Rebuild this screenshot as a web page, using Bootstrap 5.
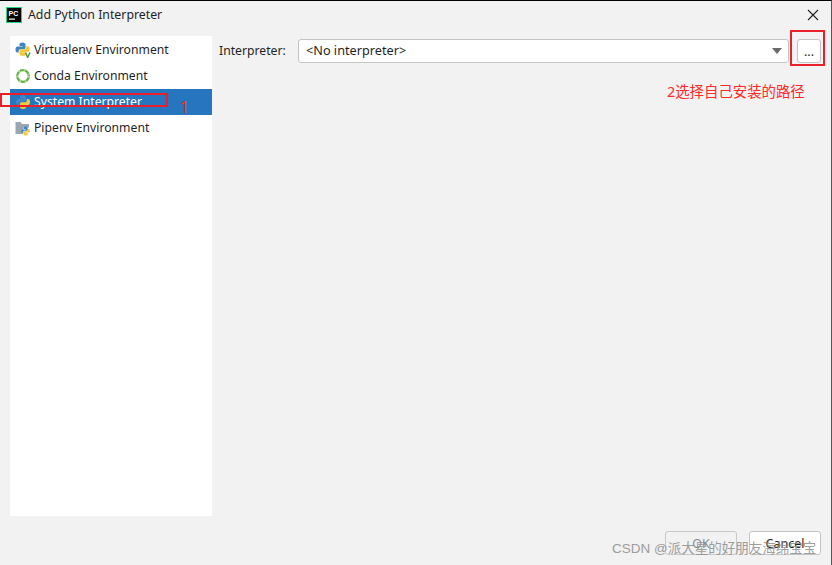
<!DOCTYPE html>
<html lang="en">
<head>
<meta charset="utf-8">
<title>Add Python Interpreter</title>
<link rel="stylesheet" href="https://cdn.jsdelivr.net/npm/bootstrap@5.3.0/dist/css/bootstrap.min.css">
<style>
html,body{height:100%;margin:0}
body{background:#f2f2f2;font-family:"Noto Sans","Noto Sans CJK SC",sans-serif;font-size:12.2px;color:#1f1f1f;overflow:hidden}
.dlg{width:832px;height:565px;position:relative;border-top:1px solid #000;border-right:1px solid #555}
.titlebar{height:28px;padding-left:6px;gap:6px;font-size:12.3px}
.pclogo{width:16px;height:16px;flex:none;display:block}
.closex{margin-left:auto;margin-right:12px;width:12px;height:12px;display:block}
.mainarea{height:480px;margin-top:7px;padding-left:10px}
.sidepanel{width:202px;background:#fff;padding-top:1px;flex:none;border-radius:0}
.siderow{height:26px;padding:0 0 0 5px;gap:3px;border:0;border-radius:0;background:transparent;color:#1f1f1f;line-height:26px;font-size:12.2px}
.siderow.is-on{background:#2675bf;color:#fff}
.ic{width:16px;height:16px;flex:none;display:block}
.formpane{padding:3px 0 0 7px;flex:1}
.formrow{height:24px;gap:0}
.flabel{width:79px;flex:none}
.combo{width:491px;height:24px;background:#fff;border:1px solid #c4c4c4;border-radius:3px;padding:0 7px;flex:none;font-size:12.7px}
.caret{margin-left:auto;margin-right:-1px;width:0;height:0;border-left:5px solid transparent;border-right:5px solid transparent;border-top:6px solid #6b6b6b}
.dots{width:24px;height:24px;margin-left:8px;padding:0;background:#fff;border:1px solid #c4c4c4;border-radius:3px;font-size:12.5px;line-height:24px;color:#1f1f1f;flex:none}
.foot{position:absolute;right:10px;top:530px;gap:12px}
.ftbtn{width:72px;height:24px;padding:0;background:#fff;border:1px solid #c4c4c4;border-radius:3px;font-size:12.5px;line-height:23px;color:#1f1f1f}
.ftbtn:disabled{background:#f2f2f2;border-color:#c9c9c9;color:#8c8c8c;opacity:1}
.redbox{position:absolute;border:2px solid #e8202c;pointer-events:none}
.rb1{left:0;top:92px;width:168px;height:14px}
.rb2{left:790px;top:29px;width:35px;height:36px}
.rednote{position:absolute;color:#fc2a2a;font-size:14.4px;line-height:18px}
.rn1{left:180px;top:97px;font-size:16px}
.rn2{left:667px;top:82px}
.wmark{position:absolute;left:612px;top:539px;color:#8f8f8f;opacity:.85;font-size:13.5px;line-height:18px;white-space:nowrap;font-family:"Liberation Sans","Noto Sans CJK SC",sans-serif}
</style>
</head>
<body>
<div class="dlg">
  <div class="titlebar d-flex align-items-center">
    <svg class="pclogo" viewBox="0 0 16 16"><rect width="16" height="16" fill="#21d789"/><rect x="1" y="1" width="14" height="14" fill="#000"/><rect x="3" y="11.5" width="6" height="1.2" fill="#fff"/><text x="2.6" y="8.6" font-size="7" font-weight="700" fill="#fff" font-family="Liberation Sans">PC</text></svg>
    <span>Add Python Interpreter</span>
    <svg class="closex" viewBox="0 0 12 12"><path d="M1 1L11 11M11 1L1 11" stroke="#222" stroke-width="1.1" fill="none"/></svg>
  </div>
  <div class="mainarea d-flex">
    <div class="sidepanel list-group">
      <div class="siderow list-group-item d-flex align-items-center">
        <svg class="ic" viewBox="0 0 16 16"><path d="M7.500 0.500C5 0.500 4.500 1.500 4.500 2.500V4H7.700V4.500H2.500C1.300 4.500 0.500 5.500 0.500 7.500S1.300 10.500 2.500 10.500H3.700V9C3.700 8 4.500 7.200 5.500 7.200H9C9.800 7.200 10.500 6.500 10.500 5.700V2.500C10.500 1.500 9.500 0.500 7.500 0.500Z" fill="#3c85c4"/><path d="M8 14C10.500 14 11 13 11 12V10.500H7.800V10H12.500C13.700 10 14.500 9 14.500 7S13.700 4 12.500 4H11.300V5.500C11.300 6.500 10.500 7.300 9.500 7.300H6C5.200 7.300 4.500 8 4.500 8.800V12C4.500 13 5.500 14 8 14Z" fill="#f3c93c"/><path d="M10.500 10.500L12.700 15.500L15 10.500" stroke="#4d9a52" stroke-width="1.500" fill="none"/></svg>
        <span>Virtualenv Environment</span>
      </div>
      <div class="siderow list-group-item d-flex align-items-center">
        <svg class="ic" viewBox="0 0 16 16"><circle cx="8" cy="8" r="5.800" fill="none" stroke="#62b543" stroke-width="2.200"/><circle cx="8" cy="8" r="5.800" fill="none" stroke="#b5dca8" stroke-width="2.200" stroke-dasharray="1.500 4"/></svg>
        <span>Conda Environment</span>
      </div>
      <div class="siderow list-group-item is-on d-flex align-items-center">
        <svg class="ic" viewBox="0 0 16 16"><path d="M8 1C5.500 1 5 2 5 3V4.500H8.200V5H3C1.800 5 1 6 1 8S1.800 11 3 11H4.200V9.500C4.200 8.500 5 7.700 6 7.700H9.500C10.300 7.700 11 7 11 6.200V3C11 2 10 1 8 1Z" fill="#3f87c6"/><path d="M8 15C10.500 15 11 14 11 13V11.500H7.800V11H13C14.200 11 15 10 15 8S14.200 5 13 5H11.800V6.500C11.800 7.500 11 8.300 10 8.300H6.500C5.700 8.300 5 9 5 9.800V13C5 14 6 15 8 15Z" fill="#f3c93c"/></svg>
        <span>System Interpreter</span>
      </div>
      <div class="siderow list-group-item d-flex align-items-center">
        <svg class="ic" viewBox="0 0 16 16"><path d="M0.500 2H5.500L7 4H14V7.500H8V14H0.500Z" fill="#9aa7b0"/><path d="M10.500 6.500C9 6.500 8.500 7 8.500 8V9H10.700V9.500H7.500C6.700 9.500 6.200 10.300 6.200 11.300S6.700 13 7.500 13H8.300V12C8.300 11.300 8.800 10.800 9.500 10.800H11.700C12.300 10.800 12.700 10.400 12.700 9.800V8C12.700 7 12 6.500 10.500 6.500Z" fill="#3f87c6"/><path d="M10.500 15.500C12 15.500 12.700 15 12.700 14V13H10.500V12.500H13.700C14.500 12.500 15 11.800 15 10.800S14.500 9 13.700 9H13V10C13 10.700 12.500 11.200 11.800 11.200H9.500C8.900 11.200 8.500 11.700 8.500 12.200V14C8.500 15 9 15.500 10.500 15.500Z" fill="#f3c93c"/></svg>
        <span>Pipenv Environment</span>
      </div>
    </div>
    <div class="formpane">
      <div class="formrow d-flex align-items-center">
        <span class="flabel">Interpreter:</span>
        <div class="combo d-flex align-items-center">
          <span>&lt;No interpreter&gt;</span>
          <span class="caret"></span>
        </div>
        <button type="button" class="dots btn">...</button>
      </div>
    </div>
  </div>
  <div class="foot d-flex">
    <button type="button" class="ftbtn btn" disabled>OK</button>
    <button type="button" class="ftbtn btn">Cancel</button>
  </div>
  <div class="redbox rb1"></div>
  <div class="redbox rb2"></div>
  <div class="rednote rn1">1</div>
  <div class="rednote rn2">2选择自己安装的路径</div>
  <div class="wmark">CSDN @派大星的好朋友海绵宝宝</div>
</div>
<script src="https://cdn.jsdelivr.net/npm/bootstrap@5.3.0/dist/js/bootstrap.bundle.min.js"></script>
</body>
</html>
